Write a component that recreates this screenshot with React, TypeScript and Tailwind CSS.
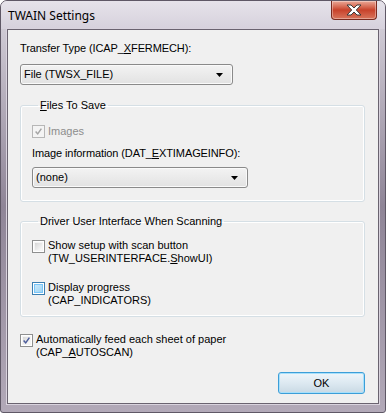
import React from "react";

const font = { fontFamily: '"Liberation Sans", Arial, sans-serif' };

function Check({ mark, stroke }: { mark?: boolean; stroke: string }) {
  if (!mark) return null;
  return (
    <svg width="9" height="9" viewBox="0 0 9 9" className="block">
      <path d="M0.8 4.4 L3.5 7.6 L8.2 0.9" fill="none" stroke={stroke} strokeWidth="1.9" />
    </svg>
  );
}

function Checkbox({ variant }: { variant: "disabled" | "off" | "hover" | "on" }) {
  const outer =
    variant === "disabled"
      ? "border-[#b7b7b7] bg-[#f4f4f4]"
      : variant === "hover"
      ? "border-[#3c7fb1] bg-white"
      : "border-[#8e8f8f] bg-white";
  const inner =
    variant === "hover"
      ? "bg-gradient-to-br from-[#cbe9fa] to-[#9fd4f3] border-[#79c6f9]"
      : variant === "disabled"
      ? "bg-[#f4f4f4] border-transparent"
      : "bg-gradient-to-br from-[#d6d6d6] to-[#fbfbfb] border-[#f4f4f4]";
  return (
    <div className={`w-[13px] h-[13px] border ${outer} p-[1px] shrink-0`}>
      <div className={`w-full h-full border ${inner} flex items-center justify-center`}>
        <Check mark={variant === "disabled" || variant === "on"} stroke={variant === "disabled" ? "#a4a4a4" : "#4b5c9b"} />
      </div>
    </div>
  );
}

function Combo({ text, width }: { text: string; width: string }) {
  return (
    <div
      className={`${width} h-[21px] rounded-[3px] border border-[#8a8a8a] bg-gradient-to-b from-[#f3f3f3] to-[#e2e2e2] flex items-center justify-between pl-[3px] pr-[9px] shadow-[inset_0_0_0_1px_#fafafa]`}
    >
      <span>{text}</span>
      <svg width="7" height="4" viewBox="0 0 7 4">
        <path d="M0 0 H7 L3.5 4 Z" fill="#000" />
      </svg>
    </div>
  );
}

export default function App() {
  return (
    <div className="w-[386px] h-[413px] bg-white" style={font}>
      <div className="w-[386px] h-[413px] rounded-t-[7px] rounded-b-[3px] border border-[#5f5866] bg-gradient-to-b from-[#d9d5de] via-[#8f8597] to-[#b2a9b8] flex flex-col text-[11px] text-black">
        {/* title bar */}
        <div className="h-[28px] flex items-start justify-between bg-gradient-to-b from-[#e6e3ea] to-[#d6d1dc] rounded-t-[6px]">
          <div className="pl-[7px] pt-[6px] text-[12px]" style={{ fontFamily: '"Noto Sans", "Open Sans", sans-serif' }}>
            TWAIN Settings
          </div>
          <div className="mr-[8px] w-[46px] h-[19px] rounded-b-[4px] border border-t-0 border-[#7a2a1f] bg-gradient-to-b from-[#eaa897] via-[#c8412a] to-[#d8745b] flex items-center justify-center shadow-[inset_0_0_0_1px_rgba(255,255,255,0.35)]">
            <svg width="16" height="12" viewBox="0 0 16 12">
              <path
                d="M1 1 H5 L8 4 L11 1 H15 L10.3 6 L15 11 H11 L8 8 L5 11 H1 L5.7 6 Z"
                fill="#fff"
                stroke="#3b3b3b"
                strokeWidth="1"
                strokeLinejoin="round"
              />
            </svg>
          </div>
        </div>

        {/* client area */}
        <div className="mx-[6px] mb-[8px] flex-1 border border-[#6a6370] shadow-[0_0_0_1px_#d9d3de] bg-[#f0f0f0] pl-[12px] pt-[12px] flex flex-col">
          <div className="leading-[13px] tracking-[-0.1px]">
            Transfer Type (ICAP_<u>X</u>FERMECH):
          </div>
          <div className="mt-[9px]">
            <Combo text="File (TWSX_FILE)" width="w-[213px]" />
          </div>

          <fieldset className="mt-[14px] w-[345px] border border-[#d5dfe5] rounded-[3px] pl-[11px] pb-[13px] shadow-[inset_0_0_0_1px_#ffffff]">
            <legend className="ml-[6px] px-[2px] leading-[13px]">
              <u>F</u>iles To Save
            </legend>
            <div className="mt-[13px] flex items-center gap-[3px] text-[#8d8d8d]">
              <Checkbox variant="disabled" />
              <span className="leading-[13px]">Images</span>
            </div>
            <div className="mt-[9px] leading-[13px] tracking-[-0.1px]">
              Image information (DAT_<u>E</u>XTIMAGEINFO):
            </div>
            <div className="mt-[7px]">
              <Combo text="(none)" width="w-[216px]" />
            </div>
          </fieldset>

          <fieldset className="mt-[13px] w-[345px] border border-[#d5dfe5] rounded-[3px] pl-[11px] pb-[9px] shadow-[inset_0_0_0_1px_#ffffff]">
            <legend className="ml-[6px] px-[2px] leading-[13px]">Driver User Interface When Scanning</legend>
            <div className="mt-[11px] flex items-start gap-[3px]">
              <div className="mt-[1px]">
                <Checkbox variant="off" />
              </div>
              <div className="leading-[13px]">
                Show setup with scan button
                <br />
                (TW_USERINTERFACE.<u>S</u>howUI)
              </div>
            </div>
            <div className="mt-[16px] flex items-start gap-[3px]">
              <div className="mt-[1px]">
                <Checkbox variant="hover" />
              </div>
              <div className="leading-[13px]">
                Display progress
                <br />
                (CAP_INDICATORS)
              </div>
            </div>
          </fieldset>

          <div className="mt-[16px] flex items-start gap-[3px]">
            <div className="mt-[1px]">
              <Checkbox variant="on" />
            </div>
            <div className="leading-[13px]">
              Automatically feed each sheet of paper
              <br />
              (CAP_<u>A</u>UTOSCAN)
            </div>
          </div>

          <div className="mt-[13px] w-[345px] flex justify-end">
            <button className="w-[87px] h-[22px] rounded-[3px] border border-[#3c9ed8] bg-gradient-to-b from-[#eef5fa] via-[#dde9f1] to-[#c9d9e4] shadow-[inset_0_0_0_1px_#a8e0fb] text-[11px] leading-[13px]">
              OK
            </button>
          </div>
        </div>
      </div>
    </div>
  );
}
